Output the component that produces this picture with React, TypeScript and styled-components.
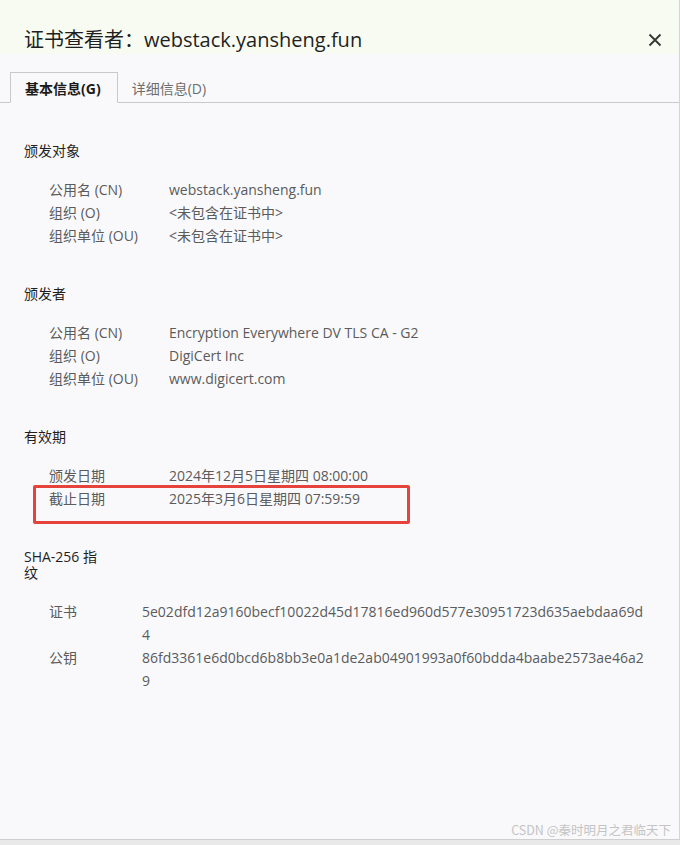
import styled, { createGlobalStyle } from "styled-components";

const GlobalStyle = createGlobalStyle`
  html, body {
    margin: 0;
    padding: 0;
    background: #e9e9e9;
  }
  body {
    font-family: "Open Sans", "Noto Sans CJK SC", sans-serif;
  }
`;

const Dialog = styled.div`
  position: relative;
  width: 679px;
  height: 839px;
  background: #f9f9fb;
  border-right: 1px solid #d4d4d4;
  border-bottom: 1px solid #cfcfcf;
  box-shadow: 0 2px 4px rgba(0, 0, 0, 0.08);
`;

const Header = styled.div`
  height: 54px;
  box-sizing: border-box;
  padding: 25px 24px 0 24px;
  background: #f8fbf2;
  display: flex;
  align-items: flex-start;
  justify-content: space-between;
`;

const Title = styled.h1`
  margin: 0;
  font-size: 20px;
  line-height: 30px;
  font-weight: 400;
  color: #1f1f1f;
  font-family: "Open Sans", "Noto Sans CJK SC", sans-serif;
`;

const CloseBtn = styled.button`
  width: 24px;
  height: 24px;
  margin-top: 3px;
  margin-right: -12px;
  border: 0;
  padding: 0;
  background: transparent;
  display: flex;
  align-items: center;
  justify-content: center;
  cursor: pointer;
`;

const TabBar = styled.div`
  margin-top: 18px;
  padding-left: 10px;
  display: flex;
  align-items: flex-end;
  border-bottom: 1px solid #c9c9c9;
`;

const Tab = styled.div<{ $active?: boolean }>`
  height: 31px;
  box-sizing: border-box;
  display: flex;
  align-items: center;
  font-size: 14px;
  margin-bottom: -1px;
  padding: 0 ${(p) => (p.$active ? "16px 0 14px" : "13px")};
  font-weight: ${(p) => (p.$active ? 700 : 400)};
  color: ${(p) => (p.$active ? "#1a1a1a" : "#6d6d6d")};
  background: ${(p) => (p.$active ? "#f9f9fb" : "transparent")};
  border: 1px solid ${(p) => (p.$active ? "#c9c9c9" : "transparent")};
  border-bottom-color: ${(p) => (p.$active ? "#f9f9fb" : "transparent")};
`;

const Content = styled.div`
  padding: 1px 24px 0;
`;

const Section = styled.section`
  margin-top: 39px;
`;

const SectionTitle = styled.div<{ $width?: number }>`
  font-size: 14px;
  line-height: 16px;
  color: #1f1f1f;
  width: ${(p) => (p.$width ? `${p.$width}px` : "auto")};
`;

const Rows = styled.div<{ $labelWidth: number }>`
  margin-top: 19px;
  padding-left: 25px;
  display: grid;
  grid-template-columns: ${(p) => p.$labelWidth}px 506px;
  font-size: 14px;
  line-height: 23px;
  color: #5b5b5b;
`;

const Row = styled.div`
  display: contents;
`;

const Label = styled.div`
  position: relative;
  white-space: nowrap;
`;

const Value = styled.div`
  word-break: break-all;
`;

const Highlight = styled.div`
  position: absolute;
  left: -16px;
  top: -2px;
  width: 371px;
  height: 33px;
  border: 3px solid #e5433b;
  border-radius: 2px;
  pointer-events: none;
`;

const Watermark = styled.div`
  position: absolute;
  right: 8px;
  bottom: 0;
  font-size: 12.5px;
  line-height: 18px;
  color: #c4c4c4;
  font-family: "Noto Sans CJK SC", sans-serif;
`;

type Item = { label: string; value: string; marked?: boolean };

const subject: Item[] = [
  { label: "公用名 (CN)", value: "webstack.yansheng.fun" },
  { label: "组织 (O)", value: "<未包含在证书中>" },
  { label: "组织单位 (OU)", value: "<未包含在证书中>" },
];

const issuer: Item[] = [
  { label: "公用名 (CN)", value: "Encryption Everywhere DV TLS CA - G2" },
  { label: "组织 (O)", value: "DigiCert Inc" },
  { label: "组织单位 (OU)", value: "www.digicert.com" },
];

const validity: Item[] = [
  { label: "颁发日期", value: "2024年12月5日星期四 08:00:00" },
  { label: "截止日期", value: "2025年3月6日星期四 07:59:59", marked: true },
];

const prints: Item[] = [
  { label: "证书", value: "5e02dfd12a9160becf10022d45d17816ed960d577e30951723d635aebdaa69d4" },
  { label: "公钥", value: "86fd3361e6d0bcd6b8bb3e0a1de2ab04901993a0f60bdda4baabe2573ae46a29" },
];

function InfoRows({ items, labelWidth }: { items: Item[]; labelWidth: number }) {
  return (
    <Rows $labelWidth={labelWidth}>
      {items.map((it) => (
        <Row key={it.label}>
          <Label>
            {it.marked && <Highlight />}
            {it.label}
          </Label>
          <Value>{it.value}</Value>
        </Row>
      ))}
    </Rows>
  );
}

export default function App() {
  return (
    <>
      <GlobalStyle />
      <Dialog>
        <Header>
          <Title>证书查看者：webstack.yansheng.fun</Title>
          <CloseBtn aria-label="关闭">
            <svg width="14" height="14" viewBox="0 0 14 14">
              <path d="M1.5 1.5 L12.5 12.5 M12.5 1.5 L1.5 12.5" stroke="#3a3a3a" strokeWidth="2" />
            </svg>
          </CloseBtn>
        </Header>
        <TabBar>
          <Tab $active>基本信息(G)</Tab>
          <Tab>详细信息(D)</Tab>
        </TabBar>
        <Content>
          <Section>
            <SectionTitle>颁发对象</SectionTitle>
            <InfoRows items={subject} labelWidth={120} />
          </Section>
          <Section>
            <SectionTitle>颁发者</SectionTitle>
            <InfoRows items={issuer} labelWidth={120} />
          </Section>
          <Section>
            <SectionTitle>有效期</SectionTitle>
            <InfoRows items={validity} labelWidth={120} />
          </Section>
          <Section>
            <SectionTitle $width={80}>SHA-256 指纹</SectionTitle>
            <InfoRows items={prints} labelWidth={93} />
          </Section>
        </Content>
        <Watermark>CSDN @秦时明月之君临天下</Watermark>
      </Dialog>
    </>
  );
}
